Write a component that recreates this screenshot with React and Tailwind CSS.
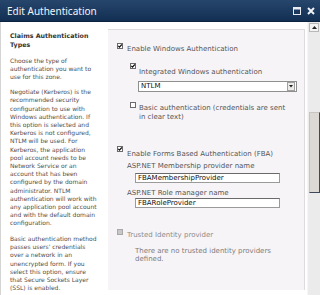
import React from "react";

const Check = ({ checked = false, disabled = false }) => (
  <svg width="6" height="6" viewBox="0 0 6 6" className="shrink-0 block">
    <rect x="0.5" y="0.5" width="5" height="5" fill={disabled ? "#c8c8c8" : "#ffffff"} stroke={disabled ? "#a8a8a8" : "#6b6b6b"} strokeWidth="1" />
    {checked && <path d="M1.3 2.8 L2.5 4.1 L4.8 1.5" fill="none" stroke="#111" strokeWidth="1.2" />}
  </svg>
);

export default function App() {
  const body = { fontFamily: '"DejaVu Sans", Verdana, sans-serif' };
  return (
    <div className="w-[320px] h-[295px] overflow-hidden bg-white flex flex-col" style={body}>
      {/* Title bar */}
      <div className="h-[22px] shrink-0 flex items-center justify-between pl-[7px] pr-[5px] bg-gradient-to-b from-[#27466c] to-[#122f53] border-b border-[#0c223e]">
        <span className="text-[10px] text-[#f2f4f8] leading-none" style={{ fontFamily: '"Noto Sans", "Open Sans", sans-serif' }}>Edit Authentication</span>
        <div className="flex items-center gap-[6px]">
          <svg width="8" height="8" viewBox="0 0 8 8" className="block">
            <rect x="0.5" y="0.5" width="7" height="7" fill="none" stroke="#e8ecf2" strokeWidth="1" />
            <rect x="0.5" y="0.5" width="7" height="2" fill="#e8ecf2" />
          </svg>
          <svg width="8" height="8" viewBox="0 0 8 8" className="block">
            <path d="M1 1 L7 7 M7 1 L1 7" stroke="#eef1f6" strokeWidth="2" />
          </svg>
        </div>
      </div>

      <div className="flex flex-1 min-h-0">
        {/* Main content */}
        <div className="flex w-[305px] border-l border-[#d4d4d4]">
          {/* Left description column */}
          <div className="w-[107px] shrink-0 pl-[9px] pt-[10px] text-[#4e4e4e]">
            <div className="text-[6.3px] leading-[8.5px] font-bold text-[#333] mb-[8px]">
              Claims Authentication<br />Types
            </div>
            <div className="text-[6px] leading-[8.2px] mb-[6.5px]">
              Choose the type of<br />authentication you want to<br />use for this zone.
            </div>
            <div className="text-[6px] leading-[8.2px] mb-[7.5px]">
              Negotiate (Kerberos) is the<br />recommended security<br />configuration to use with<br />Windows authentication. If<br />this option is selected and<br />Kerberos is not configured,<br />NTLM will be used. For<br />Kerberos, the application<br />pool account needs to be<br />Network Service or an<br />account that has been<br />configured by the domain<br />administrator. NTLM<br />authentication will work with<br />any application pool account<br />and with the default domain<br />configuration.
            </div>
            <div className="text-[6px] leading-[8.2px]">
              Basic authentication method<br />passes users' credentials<br />over a network in an<br />unencrypted form. If you<br />select this option, ensure<br />that Secure Sockets Layer<br />(SSL) is enabled.
            </div>
          </div>

          {/* Right control panel */}
          <div className="flex-1 mt-[7px] mb-[5px] bg-[#f7f4f7] border-t border-r border-[#dedade] pl-[9px] pt-[13px] text-[7px] text-[#555]">
            <div className="flex items-start">
              <Check checked />
              <span className="ml-[4px] mt-[2px] leading-[8px] whitespace-nowrap">Enable Windows Authentication</span>
            </div>
            <div className="flex items-start mt-[10px] ml-[13px]">
              <Check checked />
              <span className="ml-[3px] mt-[5px] leading-[8px] whitespace-nowrap">Integrated Windows authentication</span>
            </div>
            <div className="mt-[5px] ml-[21px] w-[159px] h-[11px] bg-white border border-[#8e8f8f] flex items-center justify-between">
              <span className="pl-[2px] text-[7px] leading-none text-[#111]">NTLM</span>
              <div className="w-[8px] h-[9px] mr-[1px] bg-[#ecebea] border border-[#a0a0a0] flex items-center justify-center">
                <svg width="4" height="3" viewBox="0 0 4 3" className="block"><path d="M0 0 L4 0 L2 2.5 Z" fill="#222" /></svg>
              </div>
            </div>
            <div className="flex items-start mt-[10px] ml-[13px]">
              <Check />
              <span className="ml-[3px] mt-[2px] leading-[9px] whitespace-nowrap">Basic authentication (credentials are sent<br />in clear text)</span>
            </div>
            <div className="flex items-start mt-[24px]">
              <Check checked />
              <span className="ml-[4px] mt-[4px] leading-[8px] whitespace-nowrap">Enable Forms Based Authentication (FBA)</span>
            </div>
            <div className="ml-[10px] mt-[4px] leading-[8px] whitespace-nowrap">ASP.NET Membership provider name</div>
            <div className="ml-[18px] mt-[3px] w-[145px] h-[10px] bg-white border border-[#9a9a9a] border-t-[#6a6a6a] flex items-center">
              <span className="pl-[2px] text-[7px] leading-none text-[#111]">FBAMembershipProvider</span>
            </div>
            <div className="ml-[10px] mt-[6px] leading-[8px] whitespace-nowrap">ASP.NET Role manager name</div>
            <div className="ml-[18px] mt-[1px] w-[145px] h-[10px] bg-white border border-[#9a9a9a] border-t-[#6a6a6a] flex items-center">
              <span className="pl-[2px] text-[7px] leading-none text-[#111]">FBARoleProvider</span>
            </div>
            <div className="flex items-start mt-[21px]">
              <Check disabled />
              <span className="ml-[4px] mt-[1.5px] leading-[8px] whitespace-nowrap text-[#8c8c8c]">Trusted Identity provider</span>
            </div>
            <div className="ml-[18px] mt-[8.5px] leading-[8px] whitespace-nowrap text-[#7c7c7c]">
              There are no trusted identity providers<br />defined.
            </div>
          </div>
        </div>

        {/* Scrollbar */}
        <div className="ml-[2px] w-[13px] bg-[#ebebeb] border-l border-[#f6f6f6] flex flex-col items-center pt-[1px]">
          <div className="w-[10px] h-[9px] bg-[#f3f3f3] border border-[#b8b8b8] flex items-center justify-center">
            <svg width="5" height="3" viewBox="0 0 5 3" className="block"><path d="M0 3 L5 3 L2.5 0 Z" fill="#222" /></svg>
          </div>
          <div className="mt-[80px] w-[11px] h-[81px] bg-[#dcd8d3] border border-[#c9c4be] border-r-[#3d4858] border-b-[#3d4858]" />
        </div>
      </div>
    </div>
  );
}
